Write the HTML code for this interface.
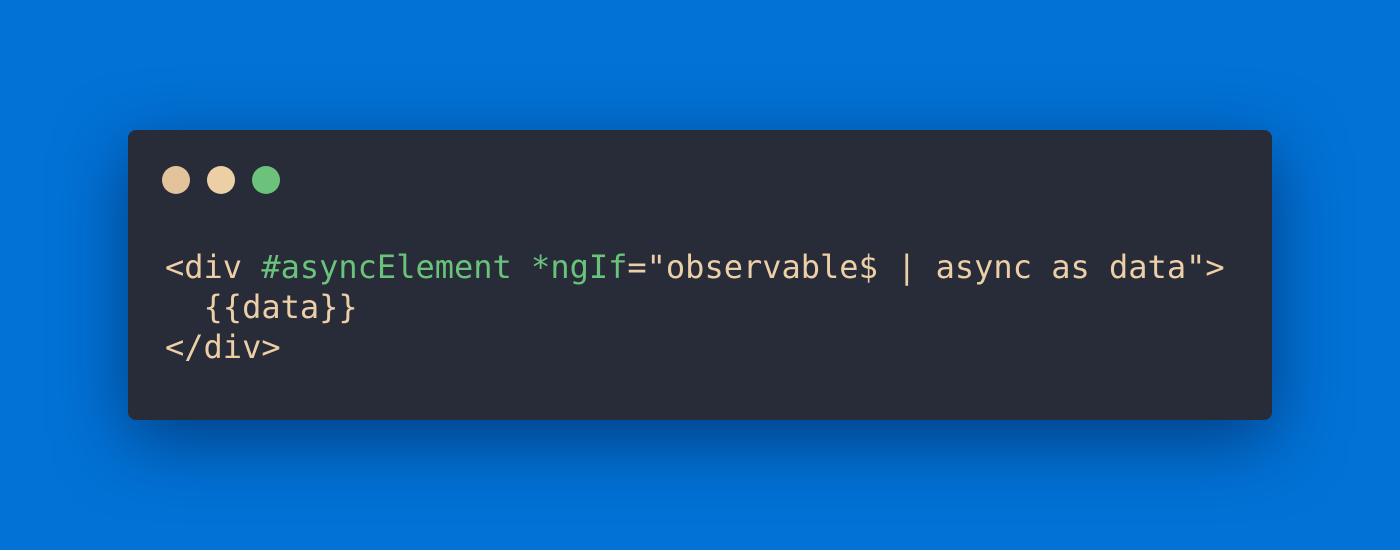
<!DOCTYPE html>
<html><head><style>
html,body{margin:0;padding:0;width:1400px;height:550px;overflow:hidden;background:#0272d6;}
.card{position:absolute;left:128px;top:130px;width:1144px;height:290px;background:#282c38;border-radius:8px;box-shadow:0 20px 70px rgba(0,20,60,0.55);}
.dot{position:absolute;top:166px;width:28px;height:28px;border-radius:50%;}
pre{position:absolute;left:165px;top:247px;margin:0;font-family:"DejaVu Sans Mono","Liberation Mono",monospace;font-size:32px;line-height:40px;color:#eccfa6;}
.g{color:#69c37a;}
</style></head><body>
<div class="card"></div>
<div class="dot" style="left:162px;background:#e3c39b"></div>
<div class="dot" style="left:207px;background:#edcfa6"></div>
<div class="dot" style="left:252px;background:#6cc27a"></div>
<pre>&lt;div <span class="g">#asyncElement</span> <span class="g">*ngIf</span>="observable$ | async as data"&gt;
  {{data}}
&lt;/div&gt;</pre>
</body></html>
